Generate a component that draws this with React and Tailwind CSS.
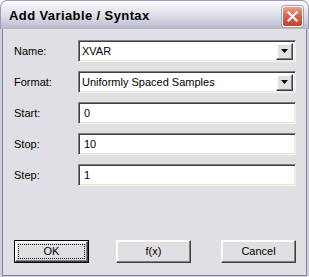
import React from "react";

const sunken =
  "border border-t-[#808080] border-l-[#808080] border-b-[#f4f3ee] border-r-[#f4f3ee] shadow-[inset_1px_1px_0_#404040,inset_-1px_-1px_0_#e8e6da] bg-white";
const raised =
  "border border-t-white border-l-white border-b-[#404040] border-r-[#404040] shadow-[inset_-1px_-1px_0_#808080,inset_1px_1px_0_#f8f8fa]";

function Arrow() {
  return (
    <svg width="7" height="4" viewBox="0 0 7 4">
      <path d="M0 0H7L3.5 4Z" fill="#000" />
    </svg>
  );
}

function Combo({ value }) {
  return (
    <div className={`w-[218px] h-[22px] flex items-center pl-[3px] pr-[2px] ${sunken}`}>
      <span className="flex-1 text-[11px] leading-none text-black">{value}</span>
      <div className={`w-[17px] h-[17px] flex items-center justify-center bg-[#e0dfe3] ${raised}`}>
        <Arrow />
      </div>
    </div>
  );
}

function Field({ value }) {
  return (
    <div className={`w-[218px] h-[22px] flex items-center pl-[5px] ${sunken}`}>
      <span className="text-[11px] leading-none text-black">{value}</span>
    </div>
  );
}

function Row({ label, children }) {
  return (
    <div className="flex items-center">
      <div className="w-[64px] text-[11px] leading-none text-black">{label}</div>
      {children}
    </div>
  );
}

function Btn({ children, def, className = "" }) {
  if (def) {
    return (
      <div className={`w-[75px] h-[23px] border border-black ${className}`}>
        <div className={`w-full h-full flex items-center justify-center bg-[#e0dfe3] ${raised} p-[2px]`}>
          <div className="w-full h-full flex items-center justify-center border border-dotted border-black text-[11px] leading-none text-black">
            {children}
          </div>
        </div>
      </div>
    );
  }
  return (
    <div
      className={`w-[75px] h-[23px] flex items-center justify-center bg-[#e0dfe3] text-[11px] leading-none text-black ${raised} ${className}`}
    >
      {children}
    </div>
  );
}

export default function App() {
  return (
    <div
      className="w-[309px] h-[277px] flex flex-col rounded-t-[7px] overflow-hidden bg-[#c4c3d4]"
      style={{ fontFamily: '"Liberation Sans", Arial, sans-serif' }}
    >
      <div className="h-[29px] flex items-center justify-between pl-[8px] pr-[5px] bg-[linear-gradient(to_bottom,#ffffff_0%,#eeeef4_20%,#dcdce6_55%,#c6c5d6_85%,#b5b4c8_100%)] border-t border-l border-r border-[#9c9bb4] rounded-t-[7px]">
        <span className="text-[13px] font-bold text-black tracking-[0.4px] pt-[1px]">Add Variable / Syntax</span>
        <div className="w-[21px] h-[21px] mt-[2px] rounded-[3px] border border-white bg-[linear-gradient(to_bottom,#eea08f_0%,#d8654f_45%,#c3412f_100%)] flex items-center justify-center shadow-[0_0_0_1px_#b0a0a8]">
          <svg width="11" height="11" viewBox="0 0 11 11">
            <path d="M1.5 1.5L9.5 9.5M9.5 1.5L1.5 9.5" stroke="#fff" strokeWidth="2.2" strokeLinecap="square" />
          </svg>
        </div>
      </div>
      <div className="flex-1 px-[2px] pb-[1px] bg-[#d2d1dd]">
        <div className="h-full border-l border-r border-b border-[#7f7e9c] bg-[#e0dfe3] pl-[11px] pt-[11px] flex flex-col">
          <div className="flex flex-col gap-[9px]">
            <Row label="Name:">
              <Combo value="XVAR" />
            </Row>
            <Row label="Format:">
              <Combo value="Uniformly Spaced Samples" />
            </Row>
            <Row label="Start:">
              <Field value="0" />
            </Row>
            <Row label="Stop:">
              <Field value="10" />
            </Row>
            <Row label="Step:">
              <Field value="1" />
            </Row>
          </div>
          <div className="flex mt-[54px]">
            <Btn def>OK</Btn>
            <Btn className="ml-[27px]">f(x)</Btn>
            <Btn className="ml-[30px]">Cancel</Btn>
          </div>
        </div>
      </div>
    </div>
  );
}
